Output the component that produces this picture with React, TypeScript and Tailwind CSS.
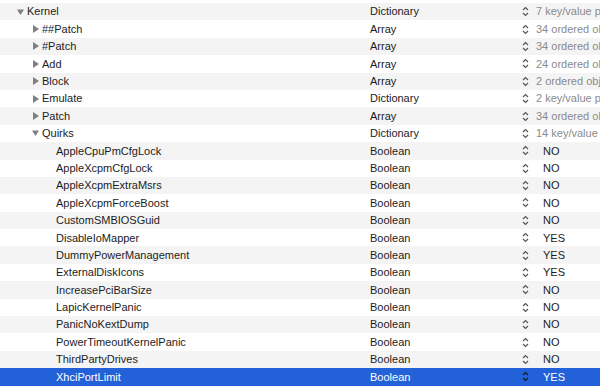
type Row = {
  key: string;
  type: string;
  value: string;
  depth: 0 | 1 | 2;
  toggle?: 'open' | 'closed';
  muted?: boolean;
};

const rows: Row[] = [
  { key: 'Kernel', type: 'Dictionary', value: '7 key/value pairs', depth: 0, toggle: 'open', muted: true },
  { key: '##Patch', type: 'Array', value: '34 ordered objects', depth: 1, toggle: 'closed', muted: true },
  { key: '#Patch', type: 'Array', value: '34 ordered objects', depth: 1, toggle: 'closed', muted: true },
  { key: 'Add', type: 'Array', value: '24 ordered objects', depth: 1, toggle: 'closed', muted: true },
  { key: 'Block', type: 'Array', value: '2 ordered objects', depth: 1, toggle: 'closed', muted: true },
  { key: 'Emulate', type: 'Dictionary', value: '2 key/value pairs', depth: 1, toggle: 'closed', muted: true },
  { key: 'Patch', type: 'Array', value: '34 ordered objects', depth: 1, toggle: 'closed', muted: true },
  { key: 'Quirks', type: 'Dictionary', value: '14 key/value pairs', depth: 1, toggle: 'open', muted: true },
  { key: 'AppleCpuPmCfgLock', type: 'Boolean', value: 'NO', depth: 2 },
  { key: 'AppleXcpmCfgLock', type: 'Boolean', value: 'NO', depth: 2 },
  { key: 'AppleXcpmExtraMsrs', type: 'Boolean', value: 'NO', depth: 2 },
  { key: 'AppleXcpmForceBoost', type: 'Boolean', value: 'NO', depth: 2 },
  { key: 'CustomSMBIOSGuid', type: 'Boolean', value: 'NO', depth: 2 },
  { key: 'DisableIoMapper', type: 'Boolean', value: 'YES', depth: 2 },
  { key: 'DummyPowerManagement', type: 'Boolean', value: 'YES', depth: 2 },
  { key: 'ExternalDiskIcons', type: 'Boolean', value: 'YES', depth: 2 },
  { key: 'IncreasePciBarSize', type: 'Boolean', value: 'NO', depth: 2 },
  { key: 'LapicKernelPanic', type: 'Boolean', value: 'NO', depth: 2 },
  { key: 'PanicNoKextDump', type: 'Boolean', value: 'NO', depth: 2 },
  { key: 'PowerTimeoutKernelPanic', type: 'Boolean', value: 'NO', depth: 2 },
  { key: 'ThirdPartyDrives', type: 'Boolean', value: 'NO', depth: 2 },
  { key: 'XhciPortLimit', type: 'Boolean', value: 'YES', depth: 2 },
];

const indent = {
  0: 'pl-[17px]',
  1: 'pl-[32px]',
  2: 'pl-[56px]',
};

function Stepper({ selected }: { selected: boolean }) {
  return (
    <svg width="7" height="11" viewBox="0 0 7 11" className="shrink-0">
      <path
        d="M1 4 L3.5 1.5 L6 4 M1 7 L3.5 9.5 L6 7"
        fill="none"
        stroke={selected ? '#1a1a1a' : '#555'}
        strokeWidth="1.2"
      />
    </svg>
  );
}

function Disclosure({ open }: { open: boolean }) {
  return (
    <svg width="8" height="8" viewBox="0 0 8 8" className="mr-[2px] shrink-0">
      {open ? <path d="M0 1.5 H7 L3.5 7 Z" fill="#808080" /> : <path d="M1 0 L7 4 L1 8 Z" fill="#808080" />}
    </svg>
  );
}

export default function App() {
  const lastIndex = rows.length - 1;
  return (
    <div
      className="h-[387px] w-[600px] overflow-hidden bg-white text-[11px] text-[#1c1c1c]"
      style={{ fontFamily: '"Liberation Sans", Arial, sans-serif' }}
    >
      <div className="h-[3px]" />
      {rows.map((row, i) => {
        const selected = i === lastIndex;
        const bg = selected ? 'bg-[#2361d8] text-white' : i % 2 === 0 ? 'bg-[#f4f4f4]' : 'bg-white';
        return (
          <div key={row.key} className={`flex h-[17.4px] items-center ${bg}`}>
            <div className={`flex w-[370px] shrink-0 items-center ${indent[row.depth]}`}>
              {row.toggle ? <Disclosure open={row.toggle === 'open'} /> : null}
              <span className="whitespace-nowrap">{row.key}</span>
            </div>
            <div className="w-[152px] shrink-0 whitespace-nowrap">{row.type}</div>
            <Stepper selected={selected} />
            <div
              className={`shrink-0 whitespace-nowrap ${
                row.muted ? 'pl-[7px] text-[#8a8a8a]' : 'pl-[14px]'
              }`}
            >
              {row.value}
            </div>
          </div>
        );
      })}
    </div>
  );
}
